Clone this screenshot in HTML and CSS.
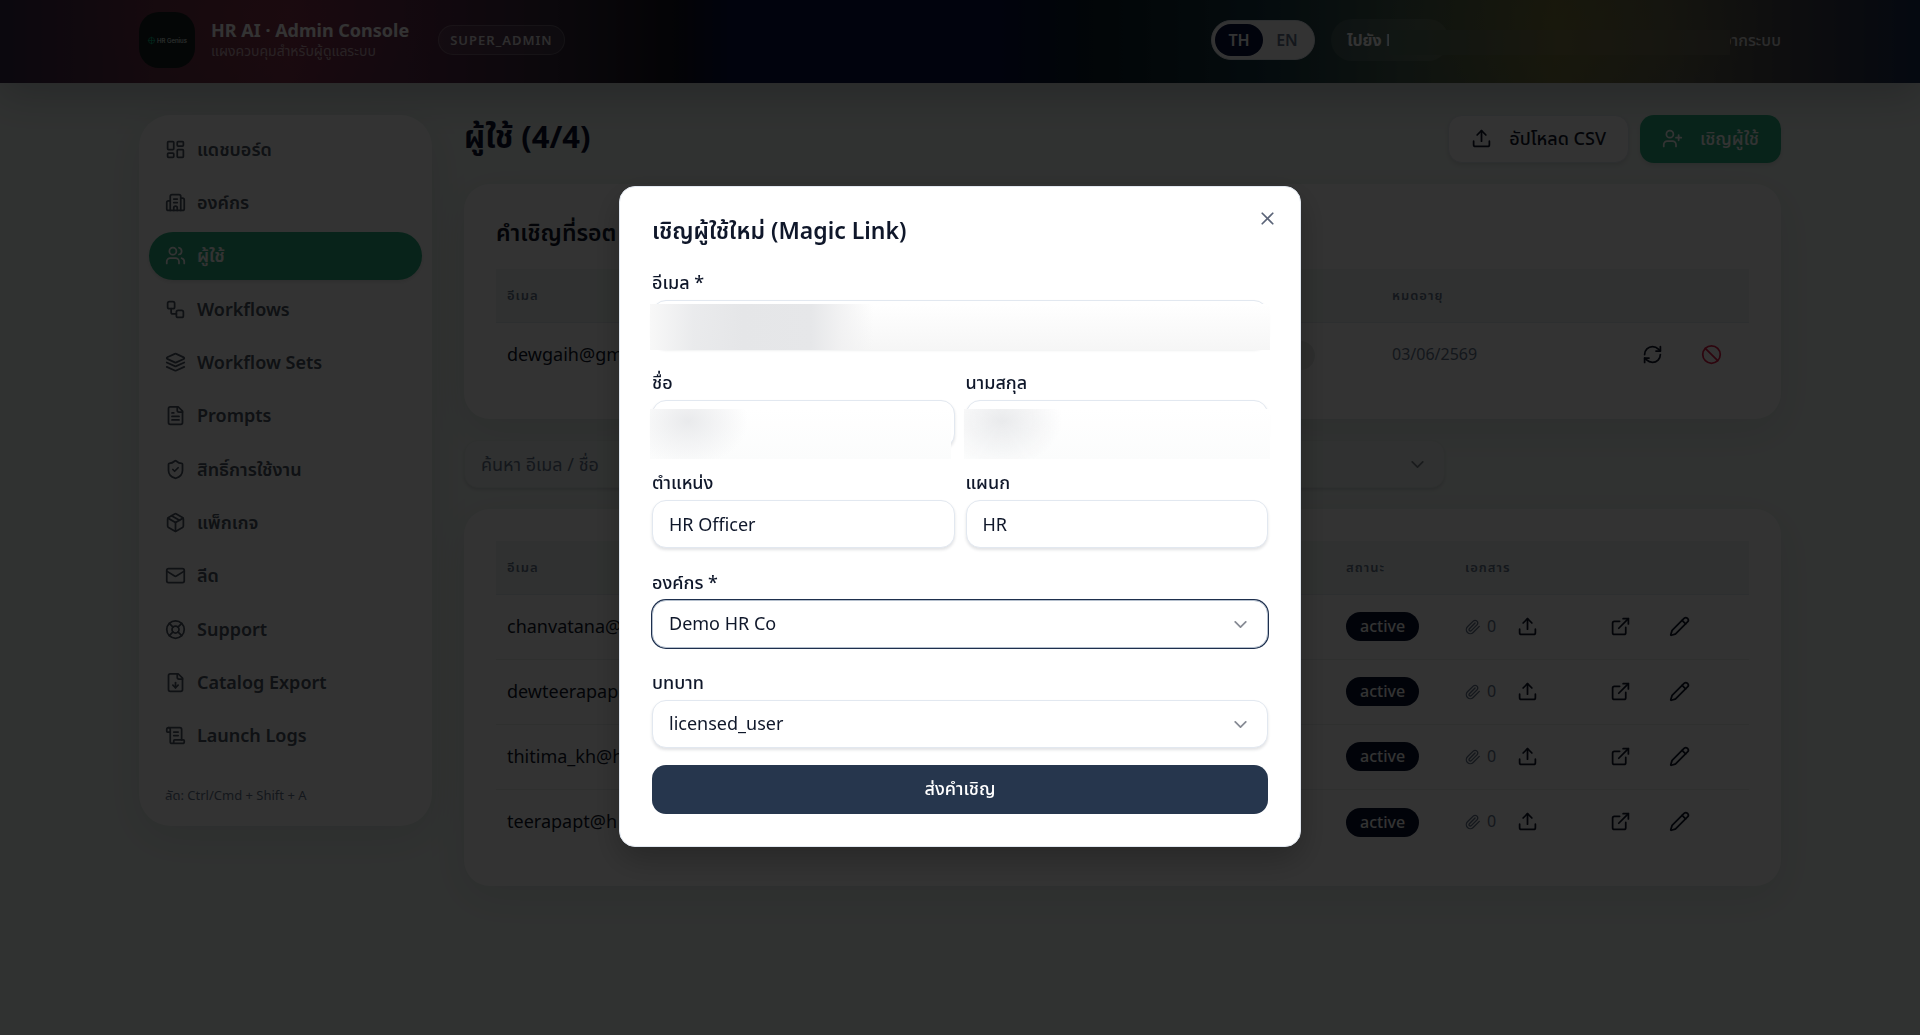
FILE: index.html
```html
<!DOCTYPE html>
<html lang="th">
<head>
    <meta charset="utf-8">
    <meta name="viewport" content="width=device-width, initial-scale=1">
    <title>HR AI · Admin Console</title>
    <link rel="stylesheet" href="styles.css">
</head>
<body>
    <!-- icon sprite -->
    <svg class="sprite" aria-hidden="true">
        <symbol id="i-dashboard" viewBox="0 0 24 24"><rect width="7" height="9" x="3" y="3" rx="1"/><rect width="7" height="5" x="14" y="3" rx="1"/><rect width="7" height="9" x="14" y="12" rx="1"/><rect width="7" height="5" x="3" y="16" rx="1"/></symbol>
        <symbol id="i-building" viewBox="0 0 24 24"><path d="M10 12h4"/><path d="M10 8h4"/><path d="M14 21v-3a2 2 0 0 0-4 0v3"/><path d="M6 10H4a2 2 0 0 0-2 2v7a2 2 0 0 0 2 2h16a2 2 0 0 0 2-2V9a2 2 0 0 0-2-2h-2"/><path d="M6 21V5a2 2 0 0 1 2-2h8a2 2 0 0 1 2 2v16"/></symbol>
        <symbol id="i-users" viewBox="0 0 24 24"><path d="M16 21v-2a4 4 0 0 0-4-4H6a4 4 0 0 0-4 4v2"/><circle cx="9" cy="7" r="4"/><path d="M22 21v-2a4 4 0 0 0-3-3.87"/><path d="M16 3.13a4 4 0 0 1 0 7.75"/></symbol>
        <symbol id="i-workflow" viewBox="0 0 24 24"><rect width="8" height="8" x="3" y="3" rx="2"/><path d="M7 11v4a2 2 0 0 0 2 2h4"/><rect width="8" height="8" x="13" y="13" rx="2"/></symbol>
        <symbol id="i-layers" viewBox="0 0 24 24"><path d="M12.83 2.18a2 2 0 0 0-1.66 0L2.6 6.08a1 1 0 0 0 0 1.83l8.58 3.91a2 2 0 0 0 1.66 0l8.58-3.9a1 1 0 0 0 0-1.83Z"/><path d="m22 12-9.17 4.16a2 2 0 0 1-1.66 0L2 12"/><path d="m22 17-9.17 4.16a2 2 0 0 1-1.66 0L2 17"/></symbol>
        <symbol id="i-file" viewBox="0 0 24 24"><path d="M15 2H6a2 2 0 0 0-2 2v16a2 2 0 0 0 2 2h12a2 2 0 0 0 2-2V7Z"/><path d="M14 2v4a2 2 0 0 0 2 2h4"/><path d="M10 9H8"/><path d="M16 13H8"/><path d="M16 17H8"/></symbol>
        <symbol id="i-shield" viewBox="0 0 24 24"><path d="M20 13c0 5-3.5 7.5-7.66 8.95a1 1 0 0 1-.67-.01C7.5 20.5 4 18 4 13V6a1 1 0 0 1 1-1c2 0 4.5-1.2 6.24-2.72a1.17 1.17 0 0 1 1.52 0C14.51 3.81 17 5 19 5a1 1 0 0 1 1 1z"/><path d="m9 12 2 2 4-4"/></symbol>
        <symbol id="i-package" viewBox="0 0 24 24"><path d="m7.5 4.27 9 5.15"/><path d="M21 8a2 2 0 0 0-1-1.73l-7-4a2 2 0 0 0-2 0l-7 4A2 2 0 0 0 3 8v8a2 2 0 0 0 1 1.73l7 4a2 2 0 0 0 2 0l7-4A2 2 0 0 0 21 16Z"/><path d="m3.3 7 8.7 5 8.7-5"/><path d="M12 22V12"/></symbol>
        <symbol id="i-mail" viewBox="0 0 24 24"><rect width="20" height="16" x="2" y="4" rx="2"/><path d="m22 7-8.97 5.7a1.94 1.94 0 0 1-2.06 0L2 7"/></symbol>
        <symbol id="i-support" viewBox="0 0 24 24"><circle cx="12" cy="12" r="10"/><path d="m4.93 4.93 4.24 4.24"/><path d="m14.83 9.17 4.24-4.24"/><path d="m14.83 14.83 4.24 4.24"/><path d="m9.17 14.83-4.24 4.24"/><circle cx="12" cy="12" r="4"/></symbol>
        <symbol id="i-export" viewBox="0 0 24 24"><path d="M15 2H6a2 2 0 0 0-2 2v16a2 2 0 0 0 2 2h12a2 2 0 0 0 2-2V7Z"/><path d="M14 2v4a2 2 0 0 0 2 2h4"/><path d="M12 18v-6"/><path d="m9 15 3 3 3-3"/></symbol>
        <symbol id="i-scroll" viewBox="0 0 24 24"><path d="M15 12h-5"/><path d="M15 8h-5"/><path d="M19 17V5a2 2 0 0 0-2-2H4"/><path d="M8 21h12a2 2 0 0 0 2-2v-1a1 1 0 0 0-1-1H11a1 1 0 0 0-1 1v1a2 2 0 1 1-4 0V5a2 2 0 1 0-4 0v2a1 1 0 0 0 1 1h3"/></symbol>
        <symbol id="i-upload" viewBox="0 0 24 24"><path d="M21 15v4a2 2 0 0 1-2 2H5a2 2 0 0 1-2-2v-4"/><path d="m17 8-5-5-5 5"/><path d="M12 3v12"/></symbol>
        <symbol id="i-user-plus" viewBox="0 0 24 24"><path d="M16 21v-2a4 4 0 0 0-4-4H6a4 4 0 0 0-4 4v2"/><circle cx="9" cy="7" r="4"/><path d="M19 8v6"/><path d="M22 11h-6"/></symbol>
        <symbol id="i-refresh" viewBox="0 0 24 24"><path d="M3 12a9 9 0 0 1 9-9 9.75 9.75 0 0 1 6.74 2.74L21 8"/><path d="M21 3v5h-5"/><path d="M21 12a9 9 0 0 1-9 9 9.75 9.75 0 0 1-6.74-2.74L3 16"/><path d="M8 16H3v5"/></symbol>
        <symbol id="i-ban" viewBox="0 0 24 24"><circle cx="12" cy="12" r="10"/><path d="m4.9 4.9 14.2 14.2"/></symbol>
        <symbol id="i-clip" viewBox="0 0 24 24"><path d="m21.44 11.05-9.19 9.19a6 6 0 0 1-8.49-8.49l8.57-8.57A4 4 0 1 1 18 8.84l-8.59 8.57a2 2 0 0 1-2.83-2.83l8.49-8.48"/></symbol>
        <symbol id="i-link" viewBox="0 0 24 24"><path d="M15 3h6v6"/><path d="M10 14 21 3"/><path d="M18 13v6a2 2 0 0 1-2 2H5a2 2 0 0 1-2-2V8a2 2 0 0 1 2-2h6"/></symbol>
        <symbol id="i-pencil" viewBox="0 0 24 24"><path d="M21.17 6.81a1 1 0 0 0-3.98-3.98L3.84 16.17a2 2 0 0 0-.5.83l-1.32 4.35a.5.5 0 0 0 .62.62l4.35-1.32a2 2 0 0 0 .83-.5z"/><path d="m15 5 4 4"/></symbol>
        <symbol id="i-chevron" viewBox="0 0 24 24"><path d="m6 9 6 6 6-6"/></symbol>
        <symbol id="i-x" viewBox="0 0 24 24"><path d="M18 6 6 18"/><path d="m6 6 12 12"/></symbol>
    </svg>

    <header class="topbar">
        <div class="container topbar-inner">
            <div class="logo">
                <svg viewBox="0 0 12 12" class="logo-mark"><circle cx="6" cy="6" r="4"/><path d="M6 1v10M1 6h10"/></svg>
                <span>HR Genius</span>
            </div>
            <div class="brand">
                <div class="brand-title">HR AI · Admin Console</div>
                <div class="brand-sub">แผงควบคุมสำหรับผู้ดูแลระบบ</div>
            </div>
            <span class="role">SUPER_ADMIN</span>
            <div class="topbar-right">
                <div class="lang">
                    <button type="button" class="on">TH</button>
                    <button type="button">EN</button>
                </div>
                <div class="account">
                    <a href="#" class="goto">ไปยัง H</a>
                    <button type="button" class="logout">จากระบบ</button>
                    <span class="redact"></span>
                </div>
            </div>
        </div>
    </header>

    <div class="container layout">
        <aside class="sidebar">
            <nav class="nav">
                <a href="#"><svg class="icon"><use href="#i-dashboard"/></svg>แดชบอร์ด</a>
                <a href="#"><svg class="icon"><use href="#i-building"/></svg>องค์กร</a>
                <a href="#" class="active"><svg class="icon"><use href="#i-users"/></svg>ผู้ใช้</a>
                <a href="#"><svg class="icon"><use href="#i-workflow"/></svg>Workflows</a>
                <a href="#"><svg class="icon"><use href="#i-layers"/></svg>Workflow Sets</a>
                <a href="#"><svg class="icon"><use href="#i-file"/></svg>Prompts</a>
                <a href="#"><svg class="icon"><use href="#i-shield"/></svg>สิทธิ์การใช้งาน</a>
                <a href="#"><svg class="icon"><use href="#i-package"/></svg>แพ็กเกจ</a>
                <a href="#"><svg class="icon"><use href="#i-mail"/></svg>ลีด</a>
                <a href="#"><svg class="icon"><use href="#i-support"/></svg>Support</a>
                <a href="#"><svg class="icon"><use href="#i-export"/></svg>Catalog Export</a>
                <a href="#"><svg class="icon"><use href="#i-scroll"/></svg>Launch Logs</a>
            </nav>
            <p class="hint">ลัด: Ctrl/Cmd + Shift + A</p>
        </aside>

        <main class="main">
            <div class="page-head">
                <h1>ผู้ใช้ (4/4)</h1>
                <div class="actions">
                    <button type="button" class="btn btn-outline"><svg class="icon"><use href="#i-upload"/></svg>อัปโหลด CSV</button>
                    <button type="button" class="btn btn-green"><svg class="icon"><use href="#i-user-plus"/></svg>เชิญผู้ใช้</button>
                </div>
            </div>

            <section class="card">
                <h2>คำเชิญที่รอต</h2>
                <table class="invites">
                    <thead>
                        <tr><th class="c-mail">อีเมล</th><th class="c-state"></th><th class="c-exp">หมดอายุ</th><th class="c-act"></th></tr>
                    </thead>
                    <tbody>
                        <tr>
                            <td>dewgaih@gm</td>
                            <td><span class="badge badge-grey"></span></td>
                            <td class="muted">03/06/2569</td>
                            <td>
                                <div class="row-actions">
                                    <button type="button" aria-label="Resend"><svg class="icon"><use href="#i-refresh"/></svg></button>
                                    <button type="button" class="danger" aria-label="Revoke"><svg class="icon"><use href="#i-ban"/></svg></button>
                                </div>
                            </td>
                        </tr>
                    </tbody>
                </table>
            </section>

            <div class="filters">
                <input type="search" placeholder="ค้นหา อีเมล / ชื่อ" aria-label="ค้นหา">
                <div class="select-wrap">
                    <select aria-label="องค์กร"><option></option></select>
                    <svg class="icon chevron"><use href="#i-chevron"/></svg>
                </div>
            </div>

            <section class="card">
                <table class="users">
                    <thead>
                        <tr><th class="c-mail">อีเมล</th><th class="c-status">สถานะ</th><th class="c-docs">เอกสาร</th><th class="c-edit"></th></tr>
                    </thead>
                    <tbody>
                        <tr>
                            <td>chanvatana@</td>
                            <td><span class="badge">active</span></td>
                            <td><div class="docs"><svg class="icon clip"><use href="#i-clip"/></svg><span>0</span><button type="button" aria-label="Upload"><svg class="icon"><use href="#i-upload"/></svg></button></div></td>
                            <td><div class="row-actions"><button type="button" aria-label="Open"><svg class="icon"><use href="#i-link"/></svg></button><button type="button" aria-label="Edit"><svg class="icon"><use href="#i-pencil"/></svg></button></div></td>
                        </tr>
                        <tr>
                            <td>dewteerapap</td>
                            <td><span class="badge">active</span></td>
                            <td><div class="docs"><svg class="icon clip"><use href="#i-clip"/></svg><span>0</span><button type="button" aria-label="Upload"><svg class="icon"><use href="#i-upload"/></svg></button></div></td>
                            <td><div class="row-actions"><button type="button" aria-label="Open"><svg class="icon"><use href="#i-link"/></svg></button><button type="button" aria-label="Edit"><svg class="icon"><use href="#i-pencil"/></svg></button></div></td>
                        </tr>
                        <tr>
                            <td>thitima_kh@h</td>
                            <td><span class="badge">active</span></td>
                            <td><div class="docs"><svg class="icon clip"><use href="#i-clip"/></svg><span>0</span><button type="button" aria-label="Upload"><svg class="icon"><use href="#i-upload"/></svg></button></div></td>
                            <td><div class="row-actions"><button type="button" aria-label="Open"><svg class="icon"><use href="#i-link"/></svg></button><button type="button" aria-label="Edit"><svg class="icon"><use href="#i-pencil"/></svg></button></div></td>
                        </tr>
                        <tr>
                            <td>teerapapt@h</td>
                            <td><span class="badge">active</span></td>
                            <td><div class="docs"><svg class="icon clip"><use href="#i-clip"/></svg><span>0</span><button type="button" aria-label="Upload"><svg class="icon"><use href="#i-upload"/></svg></button></div></td>
                            <td><div class="row-actions"><button type="button" aria-label="Open"><svg class="icon"><use href="#i-link"/></svg></button><button type="button" aria-label="Edit"><svg class="icon"><use href="#i-pencil"/></svg></button></div></td>
                        </tr>
                    </tbody>
                </table>
            </section>
        </main>
    </div>

    <div class="overlay">
        <div class="modal" role="dialog" aria-modal="true" aria-labelledby="modal-title">
            <button type="button" class="close" aria-label="Close"><svg class="icon"><use href="#i-x"/></svg></button>
            <h2 id="modal-title">เชิญผู้ใช้ใหม่ (Magic Link)</h2>
            <form class="form">
                <div class="field wide">
                    <label for="email">อีเมล *</label>
                    <div class="control">
                        <input id="email" type="email">
                        <span class="smudge smudge-email"></span>
                    </div>
                </div>
                <div class="field">
                    <label for="first">ชื่อ</label>
                    <div class="control">
                        <input id="first" type="text">
                        <span class="smudge smudge-first"></span>
                    </div>
                </div>
                <div class="field">
                    <label for="last">นามสกุล</label>
                    <div class="control">
                        <input id="last" type="text">
                        <span class="smudge smudge-last"></span>
                    </div>
                </div>
                <div class="field">
                    <label for="position">ตำแหน่ง</label>
                    <input id="position" type="text" value="HR Officer">
                </div>
                <div class="field">
                    <label for="dept">แผนก</label>
                    <input id="dept" type="text" value="HR">
                </div>
                <div class="field wide">
                    <label for="org">องค์กร *</label>
                    <div class="select-wrap">
                        <select id="org" class="focused"><option>Demo HR Co</option></select>
                        <svg class="icon chevron"><use href="#i-chevron"/></svg>
                    </div>
                </div>
                <div class="field wide">
                    <label for="role">บทบาท</label>
                    <div class="select-wrap">
                        <select id="role"><option>licensed_user</option></select>
                        <svg class="icon chevron"><use href="#i-chevron"/></svg>
                    </div>
                </div>
                <button type="submit" class="submit">ส่งคำเชิญ</button>
            </form>
        </div>
    </div>
</body>
</html>
```

FILE: styles.css
```css
* { box-sizing: border-box; }
body {
    margin: 0;
    min-height: 100vh;
    background: #f0f8f4;
    color: #0f172a;
    font-family: "Noto Sans", "Noto Sans Thai", sans-serif;
    font-size: 18px;
    line-height: 27px;
}
button, input, select { font: inherit; color: inherit; }
button { border: 0; background: none; padding: 0; cursor: pointer; }
a { color: inherit; text-decoration: none; }
h1, h2, p { margin: 0; }

.sprite { display: none; }
.icon {
    width: 21px;
    height: 21px;
    flex: none;
    display: block;
    fill: none;
    stroke: currentColor;
    stroke-width: 2;
    stroke-linecap: round;
    stroke-linejoin: round;
}
.container { margin: 0 139px; }

/* top bar */
.topbar {
    background:
        radial-gradient(ellipse 200px 70px at 14% 20%, rgba(200, 50, 70, .12), transparent),
        radial-gradient(ellipse 200px 70px at 82% 30%, rgba(180, 160, 20, .12), transparent),
        linear-gradient(90deg, #372846 0, #693246 8%, #7d324b 15%, #5f2d4b 21%, #37283c 29%, #14141e 35%, #051041 38%, #051041 52%, #0a1e28 57%, #193c46 66%, #465f50 73%, #737341 81%, #646450 87%, #41414b 94%, #192d50);
    color: #fff;
    box-shadow: 0 12px 40px rgba(15, 23, 42, .2);
}
.topbar-inner { display: flex; align-items: center; height: 83px; padding-bottom: 3px; }
.logo {
    display: flex;
    align-items: center;
    justify-content: center;
    gap: 1px;
    width: 56px;
    height: 56px;
    border-radius: 20px;
    background: #14211f;
    font-family: Inter, sans-serif;
    font-size: 6px;
    font-weight: 500;
    color: #e1ebe8;
    white-space: nowrap;
}
.logo-mark { width: 9px; height: 9px; flex: none; fill: none; stroke: #10b981; stroke-width: 1; }
.brand { margin-left: 16px; padding-bottom: 2px; }
.brand-title { font-weight: 700; line-height: 24px; }
.brand-sub { font-size: 14px; line-height: 18px; color: rgba(255, 255, 255, .6); }
.role {
    margin-left: 29px;
    padding: 0 11px;
    border: 1px solid rgba(255, 255, 255, .2);
    border-radius: 20px;
    background: rgba(255, 255, 255, .08);
    font-size: 13px;
    font-weight: 600;
    line-height: 28px;
    letter-spacing: 1px;
    color: rgba(255, 255, 255, .85);
}
.topbar-right { display: flex; align-items: center; gap: 16px; margin-left: auto; }
.lang {
    display: flex;
    padding: 3px;
    border: 1px solid #e2e8f0;
    border-radius: 20px;
    background: #fff;
    font-size: 16px;
    font-weight: 600;
    line-height: 32px;
    color: #64748b;
}
.lang button { width: 48px; border-radius: 16px; }
.lang .on { background: #050f3c; color: #fff; }
.account {
    position: relative;
    display: flex;
    align-items: center;
    justify-content: space-between;
    width: 450px;
    font-size: 16px;
    font-weight: 700;
}
.goto {
    width: 118px;
    padding: 0 16px;
    border-radius: 21px;
    background: rgba(255, 255, 255, .1);
    line-height: 42px;
}
.logout { font-weight: 500; color: rgba(255, 255, 255, .8); }
.redact {
    position: absolute;
    left: 58px;
    right: 51px;
    top: 11px;
    height: 25px;
    background: linear-gradient(90deg, #506e5f, #5f6e55 20%, #7d7846 50%, #737050 75%, #646258);
}

/* layout */
.layout { display: flex; align-items: flex-start; gap: 32px; padding: 32px 0; }
.sidebar {
    width: 293px;
    flex: none;
    padding: 10px;
    border-radius: 32px;
    background: #fff;
    box-shadow: 0 12px 40px rgba(15, 23, 42, .08);
}
.nav { display: flex; flex-direction: column; justify-content: space-between; min-height: 635px; }
.nav a {
    display: flex;
    align-items: center;
    gap: 11px;
    height: 48px;
    padding: 0 16px;
    border-radius: 24px;
    font-weight: 600;
    color: #4b5563;
}
.nav .active { background: #28b080; color: #fff; box-shadow: 0 2px 4px rgba(0, 0, 0, .1); }
.hint { padding: 23px 16px 9px; font-size: 13px; line-height: 24px; color: #64748b; }

.main { flex: 1; min-width: 0; display: flex; flex-direction: column; gap: 21px; }
.page-head { display: flex; align-items: center; justify-content: space-between; }
h1 { padding-bottom: 5px; font-size: 31px; line-height: 43px; font-weight: 700; color: #0a1330; }
.actions { display: flex; gap: 11px; }
.btn {
    display: flex;
    align-items: center;
    gap: 17px;
    height: 48px;
    padding: 0 22px 1px;
    border-radius: 14px;
    font-weight: 500;
    box-shadow: 0 2px 4px rgba(0, 0, 0, .1);
}
.btn-outline { border: 1px solid #e2e8f0; background: #fff; }
.btn-green { background: #28b080; color: #fff; }

.card {
    padding: 32px;
    border-radius: 26px;
    background: #fff;
    box-shadow: 0 12px 40px rgba(15, 23, 42, .08);
}
.card h2 { font-size: 23px; font-weight: 600; line-height: 32px; margin-bottom: 21px; }
table { width: 100%; border-collapse: collapse; table-layout: fixed; }
th {
    height: 53px;
    padding: 0 11px;
    background: #f0f6f3;
    border-bottom: 1px solid #e2e8f0;
    text-align: left;
    font-size: 13px;
    font-weight: 600;
    letter-spacing: 1px;
    color: #64748b;
}
td { height: 65px; padding: 0 11px; white-space: nowrap; }
tbody tr + tr td { border-top: 1px solid #e8eeec; }
.muted { font-size: 16px; color: #64748b; }
.c-state { width: 150px; }
.c-exp { width: 250px; }
.c-act { width: 118px; }
.c-status { width: 119px; }
.c-docs { width: 145px; }
.c-edit { width: 150px; }
.badge {
    display: inline-block;
    padding: 0 14px;
    border-radius: 15px;
    background: #050f2d;
    color: #fff;
    font-size: 16px;
    font-weight: 500;
    line-height: 29px;
    vertical-align: middle;
}
.badge-grey { width: 73px; height: 29px; background: #e6ebe9; }
.row-actions { display: flex; gap: 38px; }
.danger { color: #e11d48; }
.docs { display: flex; align-items: center; gap: 6px; font-size: 16px; color: #64748b; }
.docs button { margin-left: 15px; color: #0f172a; }
.clip { width: 16px; height: 16px; }

.filters { display: flex; gap: 11px; width: 981px; }
.filters input, .filters .select-wrap { flex: 1; min-width: 0; }
.filters input, .filters select { background: #f0f6f4; border-color: #e6edeb; }
.filters input::placeholder { color: #64748b; }

input, select {
    display: block;
    width: 100%;
    height: 48px;
    padding: 0 16px 1px;
    border: 1px solid #e2e8f0;
    border-radius: 14px;
    background: #fff;
    box-shadow: 0 2px 3px rgba(15, 23, 42, .12);
    outline: none;
}
select { appearance: none; }
.select-wrap { position: relative; }
.chevron { position: absolute; right: 17px; top: 14px; opacity: .5; pointer-events: none; }

/* invite dialog */
.overlay {
    position: fixed;
    inset: 0;
    display: flex;
    align-items: center;
    justify-content: center;
    padding-bottom: 2px;
    background: rgba(0, 0, 0, .8);
}
.modal {
    position: relative;
    width: 682px;
    padding: 32px;
    border: 1px solid #e2e8f0;
    border-radius: 16px;
    background: #fff;
    box-shadow: 0 12px 32px rgba(0, 0, 0, .25);
}
.modal h2 { font-size: 23px; font-weight: 600; line-height: 22px; margin-bottom: 27px; }
.close { position: absolute; right: 22px; top: 21px; color: #5b6478; }
.form { display: grid; grid-template-columns: 1fr 1fr; column-gap: 11px; row-gap: 20px; }
.wide { grid-column: 1 / -1; }
label { display: block; margin-bottom: 4px; line-height: 28px; font-weight: 500; }
.focused { border-color: #b4bfcd; box-shadow: 0 0 0 1px #1e2f4d; }
.control { position: relative; }
.smudge { position: absolute; left: -2px; right: -2px; height: 50px; top: 9px; }
.smudge-email {
    top: 4px;
    height: 46px;
    background:
        linear-gradient(90deg, #f8f8f8, rgba(232, 233, 235, .9) 7%, #e5e6e8 15%, #e6e7e9 26%, rgba(240, 240, 241, .8) 31%, rgba(255, 255, 255, 0) 36%),
        linear-gradient(#fff, #f6f6f6);
}
.smudge-first, .smudge-last {
    background: radial-gradient(ellipse 60px 45px at 38px 12px, #e9eaec, rgba(255, 255, 255, 0)), linear-gradient(#fff, #fbfcfc);
}
.smudge-first { right: 4px; }
.submit {
    grid-column: 1 / -1;
    height: 49px;
    margin-top: -3px;
    padding-bottom: 2px;
    border-radius: 14px;
    background: #26364d;
    color: #fff;
    font-weight: 500;
}
```
